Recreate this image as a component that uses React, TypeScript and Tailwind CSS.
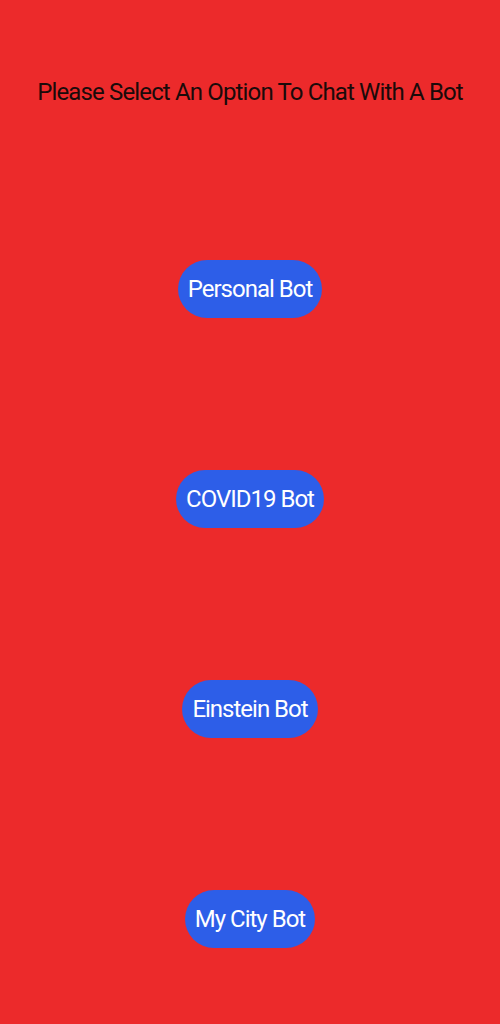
import React from 'react';

const bots = ['Personal Bot', 'COVID19 Bot', 'Einstein Bot', 'My City Bot'];

export default function App() {
  return (
    <div className="min-h-[1024px] w-full bg-[#ec2a2b] flex flex-col items-center" style={{ fontFamily: 'Roboto, "Liberation Sans", sans-serif' }}>
      <h1 className="mt-[76px] h-[32px] leading-[32px] text-[24px] tracking-[-0.85px] text-[#1a0a0a] font-normal">
        Please Select An Option To Chat With A Bot
      </h1>
      <div className="mt-[152px] flex flex-col items-center gap-[152px]">
        {bots.map((bot) => (
          <button
            key={bot}
            className="h-[58px] px-[10px] rounded-full bg-[#2d5ee8] text-white text-[24px] tracking-[-1px] leading-none"
          >
            {bot}
          </button>
        ))}
      </div>
    </div>
  );
}
